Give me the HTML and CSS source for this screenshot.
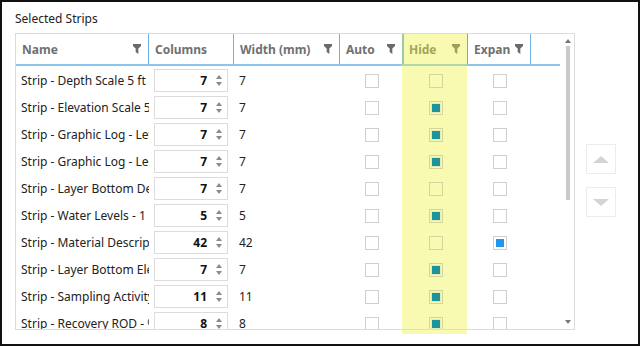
FILE: index.html
```html
<!DOCTYPE html>
<html lang="en">
<head>
    <meta charset="UTF-8">
    <title>Selected Strips</title>
    <link rel="stylesheet" href="styles.css">
</head>
<body>
    <div class="frame">
        <div class="title">Selected Strips</div>
        <div class="content">
            <div class="table-wrap">
                <div class="grid">
                    <div class="head">
                        <div class="hcell">Name <svg class="funnel" viewBox="0 0 9 11"><path d="M0 0H9V2L6 5V11L3 9V5L0 2Z"/></svg></div>
                        <div class="hcell">Columns</div>
                        <div class="hcell">Width (mm) <svg class="funnel" viewBox="0 0 9 11"><path d="M0 0H9V2L6 5V11L3 9V5L0 2Z"/></svg></div>
                        <div class="hcell">Auto <svg class="funnel" viewBox="0 0 9 11"><path d="M0 0H9V2L6 5V11L3 9V5L0 2Z"/></svg></div>
                        <div class="hcell hide-head">Hide <svg class="funnel" viewBox="0 0 9 11"><path d="M0 0H9V2L6 5V11L3 9V5L0 2Z"/></svg></div>
                        <div class="hcell">Expan <svg class="funnel" viewBox="0 0 9 11"><path d="M0 0H9V2L6 5V11L3 9V5L0 2Z"/></svg></div>
                        <div class="hcell last"></div>
                    </div>
                    <div class="rows" id="rows">
                        <!-- rows are generated below -->
                    </div>
                    <div class="scrollbar">
                        <span class="sb-up"></span>
                        <span class="thumb"></span>
                        <span class="sb-down"></span>
                    </div>
                </div>
                <!-- highlight of the selected column, drawn over the grid -->
                <div class="hide-band"></div>
            </div>
            <div class="movers">
                <button class="mover"><span class="tri-up"></span></button>
                <button class="mover"><span class="tri-down"></span></button>
            </div>
        </div>
    </div>

    <script>
        const strips = [
            ['Strip - Depth Scale 5 ft', 7, false, false],
            ['Strip - Elevation Scale 5 ft', 7, true, false],
            ['Strip - Graphic Log - Left', 7, true, false],
            ['Strip - Graphic Log - Legend', 7, true, false],
            ['Strip - Layer Bottom Depth', 7, false, false],
            ['Strip - Water Levels - 1', 5, true, false],
            ['Strip - Material Description', 42, false, true],
            ['Strip - Layer Bottom Elevation', 7, true, false],
            ['Strip - Sampling Activity', 11, true, false],
            ['Strip - Recovery ROD - %', 8, true, false]
        ];

        function box(checked, kind) {
            return '<span class="check' + (checked ? ' on ' + kind : '') + '"></span>';
        }

        const rows = document.getElementById('rows');
        strips.forEach(([name, cols, hide, expand]) => {
            const row = document.createElement('div');
            row.className = 'row';
            row.innerHTML =
                '<div class="cell name">' + name + '</div>' +
                '<div class="cell"><div class="spin"><b>' + cols + '</b><span class="arrows"><i class="a-up"></i><i class="a-down"></i></span></div></div>' +
                '<div class="cell width">' + cols + '</div>' +
                '<div class="cell mid">' + box(false) + '</div>' +
                '<div class="cell mid hide-cell">' + box(hide, 'teal') + '</div>' +
                '<div class="cell mid">' + box(expand, 'blue') + '</div>' +
                '<div class="cell"></div>';
            rows.appendChild(row);
        });
    </script>
</body>
</html>
```

FILE: styles.css
```css
body {
    margin: 0;
    background: #fff;
    font-family: "Noto Sans", "Open Sans", sans-serif;
    font-size: 12px;
    color: #222;
}
.frame {
    box-sizing: border-box;
    width: 640px;
    height: 346px;
    border: 2px solid #111;
    padding: 9px 0 0 13px;
}
.title {
    height: 16px;
    line-height: 16px;
    margin-bottom: 6px;
}
.content {
    display: flex;
    align-items: flex-start;
}
.table-wrap {
    position: relative;
}
.grid {
    position: relative;
    width: 558px;
    height: 295px;
    border: 1px solid #dcdcdc;
    overflow: hidden;
}
.hide-band {
    position: absolute;
    z-index: 1;
    left: 387px;
    top: 0;
    width: 65px;
    height: 301px;
    background: rgba(238, 242, 60, 0.4);
    pointer-events: none;
}
.head, .row {
    position: relative;
    display: grid;
    grid-template-columns: 133px 85px 106px 63px 65px 63px 29px;
}
.head {
    height: 30px;
    border-bottom: 2px solid #8cc5ee;
    width: 544px;
}
.hcell {
    display: flex;
    align-items: center;
    justify-content: space-between;
    padding: 0 7px 0 6px;
    border-right: 1px solid #6fb3e6;
    font-weight: bold;
    color: #707070;
    overflow: hidden;
    white-space: nowrap;
}
.hcell.last {
    border-right: none;
}
.hide-head {
    box-shadow: inset 1px 0 0 #6fb59a;
    border-right-color: #6fb59a;
}
.funnel {
    width: 8px;
    height: 10px;
    fill: #6a6a6a;
    flex: none;
}
.rows {
    padding-top: 1px;
}
.row {
    height: 27px;
}
.cell {
    display: flex;
    align-items: center;
    overflow: hidden;
    white-space: nowrap;
}
.name {
    padding: 0 4px 0 5px;
}
.width {
    padding-left: 5px;
}
.mid {
    justify-content: center;
}
.spin {
    box-sizing: border-box;
    display: flex;
    align-items: center;
    justify-content: flex-end;
    width: 74px;
    height: 23px;
    margin-left: 5px;
    border: 1px solid #dcdcdc;
    background: #fff;
    padding-right: 5px;
}
.spin b {
    font-size: 12px;
    color: #111;
}
.arrows {
    display: flex;
    flex-direction: column;
    gap: 3px;
    margin-left: 9px;
}
.arrows i {
    width: 0;
    height: 0;
    border-left: 3px solid transparent;
    border-right: 3px solid transparent;
}
.a-up {
    border-bottom: 4px solid #8a8a8a;
}
.a-down {
    border-top: 4px solid #8a8a8a;
}
.check {
    box-sizing: border-box;
    width: 14px;
    height: 14px;
    border: 1px solid #cfcfcf;
    background: #fff;
    padding: 2px;
}
.hide-cell .check {
    position: relative;
    z-index: 2;
    background: transparent;
    border-color: #d3d69c;
}
.check.on::after {
    content: "";
    display: block;
    width: 8px;
    height: 8px;
}
.check.teal::after {
    background: #1d939c;
    box-shadow: 0 0 0 1px #e6eab0;
}
.check.blue::after {
    background: #2395ec;
}
.scrollbar {
    position: absolute;
    right: 0;
    top: 0;
    bottom: 0;
    width: 13px;
    display: flex;
    flex-direction: column;
    align-items: center;
}
.sb-up, .sb-down {
    width: 0;
    height: 0;
    border-left: 3px solid transparent;
    border-right: 3px solid transparent;
}
.sb-up {
    margin-top: 5px;
    border-bottom: 4px solid #777;
}
.sb-down {
    margin-top: auto;
    margin-bottom: 5px;
    border-top: 4px solid #777;
}
.thumb {
    width: 4px;
    height: 154px;
    margin-top: 3px;
    background: #c9c9c9;
}
.movers {
    display: flex;
    flex-direction: column;
    gap: 13px;
    margin: 111px 0 0 11px;
}
.mover {
    display: flex;
    align-items: center;
    justify-content: center;
    width: 30px;
    height: 30px;
    padding: 0;
    border: 1px solid #ececec;
    background: #fff;
}
.tri-up, .tri-down {
    width: 0;
    height: 0;
    border-left: 8px solid transparent;
    border-right: 8px solid transparent;
}
.tri-up {
    border-bottom: 7px solid #d4d4d4;
}
.tri-down {
    border-top: 7px solid #d4d4d4;
}
```
